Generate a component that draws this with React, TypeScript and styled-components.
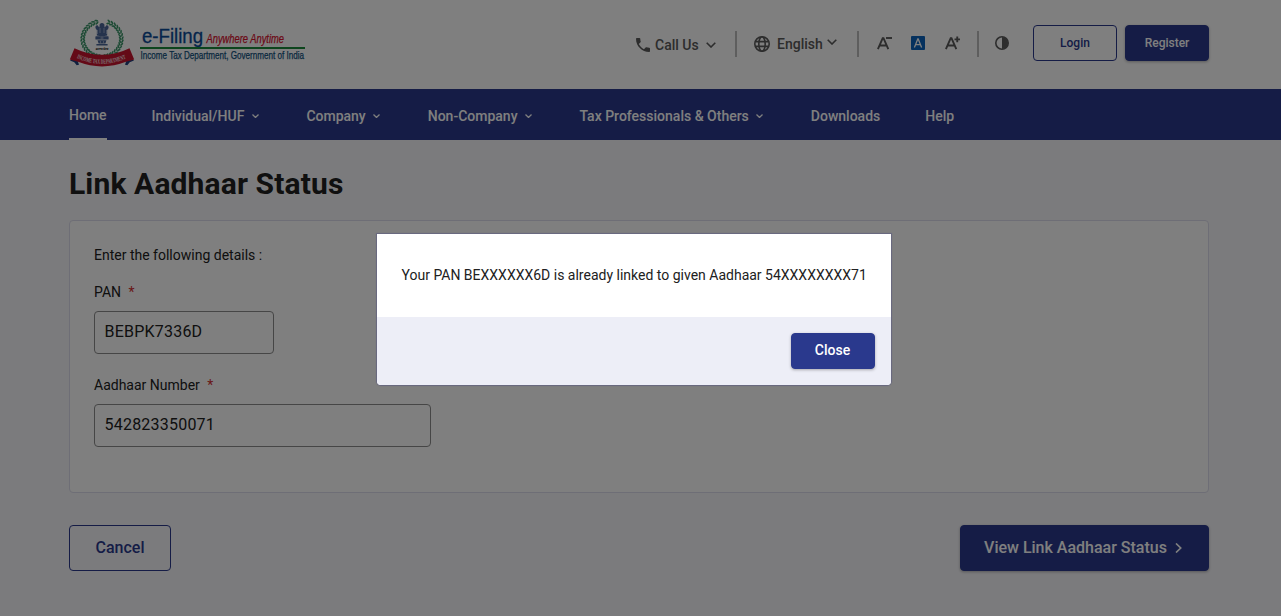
import React from "react";
import styled, { createGlobalStyle } from "styled-components";

const GlobalStyle = createGlobalStyle`
  * { box-sizing: border-box; }
  body { margin: 0; background: #f7f7fb; font-family: Roboto, "Liberation Sans", sans-serif; color: #212121; }
  button, input { font-family: inherit; }
`;

const Page = styled.div`
  position: relative;
  height: 616px;
  overflow: hidden;
`;

const Header = styled.header`
  display: flex;
  justify-content: space-between;
  height: 89px;
  padding: 0 72px 0 69px;
  background: #fff;
`;

const Logo = styled.svg`
  display: block;
  width: 240px;
  height: 60px;
  margin-top: 14px;
  overflow: visible;
`;

const Tools = styled.div`
  display: flex;
  height: 36px;
  margin-top: 25px;
  align-items: center;
  color: #5a5a5a;
`;

const Tool = styled.div<{ $gap: number; $lift?: number; $drop?: number }>`
  display: flex;
  align-items: center;
  margin-left: ${(p) => p.$gap}px;
  padding-top: ${(p) => p.$drop ?? 0}px;
  padding-bottom: ${(p) => p.$lift ?? 0}px;
  svg { display: block; }
`;

const ToolLabel = styled.span<{ $width: number; $left: number; $right: number }>`
  width: ${(p) => p.$width}px;
  margin: 0 ${(p) => p.$right}px 0 ${(p) => p.$left}px;
  font-size: 14px;
  font-weight: 500;
  line-height: 20px;
  white-space: nowrap;
`;

const Divider = styled.span<{ $gap: number }>`
  width: 2px;
  height: 26px;
  margin: 2px 0 0 ${(p) => p.$gap}px;
  background: #bdbdbd;
`;

const Button = styled.button<{ $primary?: boolean; $large?: boolean; $width: number; $size?: number; $nudge?: boolean }>`
  display: flex;
  align-items: center;
  justify-content: center;
  width: ${(p) => p.$width}px;
  height: ${(p) => (p.$large ? 46 : 36)}px;
  padding: ${(p) => (p.$nudge ? "0 1px 2px 0" : "0 0 1px")};
  border: 1px solid #2a398d;
  border-radius: 4px;
  background: ${(p) => (p.$primary ? "#2a398d" : "transparent")};
  color: ${(p) => (p.$primary ? "#fff" : "#2a398d")};
  box-shadow: ${(p) => (p.$primary ? "0 1px 3px rgba(0, 0, 0, 0.3)" : "none")};
  font-size: ${(p) => p.$size ?? 14}px;
  font-weight: 500;
  white-space: nowrap;
`;

const HeaderButtons = styled.div`
  display: flex;
  gap: 8px;
  margin-left: 24px;
`;

const Nav = styled.nav`
  display: flex;
  gap: 45px;
  height: 51px;
  padding-left: 69px;
  background: #2a398d;
`;

const NavItem = styled.a<{ $active?: boolean; $menu?: boolean }>`
  display: flex;
  align-items: center;
  gap: 7.5px;
  height: 51px;
  padding-top: 3px;
  padding-right: ${(p) => (p.$menu ? 2.5 : 0)}px;
  border-bottom: ${(p) => (p.$active ? "2px solid #fff" : "0")};
  color: #fff;
  font-size: 14px;
  font-weight: 500;
  white-space: nowrap;
`;

const Main = styled.main`
  padding: 24px 72px 0 69px;
`;

const Title = styled.h1`
  margin: 0 0 16px;
  font-size: 30px;
  line-height: 40px;
  font-weight: 700;
  letter-spacing: 0.13px;
`;

const Card = styled.section`
  height: 273px;
  padding: 24px;
  border: 1px solid #dcdcec;
  border-radius: 4px;
  background: #fff;
`;

const Intro = styled.p`
  margin: 0 0 17px;
  font-size: 14px;
  line-height: 20px;
`;

const Field = styled.label`
  display: block;
  margin-bottom: 21px;
  font-size: 14px;
  line-height: 20px;
`;

const Required = styled.span`
  margin-left: 7.5px;
  color: #d32f2f;
`;

const Input = styled.input<{ $width: number }>`
  display: block;
  width: ${(p) => p.$width}px;
  height: 43px;
  margin-top: 9px;
  padding: 0 9.5px 2px;
  border: 1px solid #8c8c8c;
  border-radius: 4px;
  background: #fff;
  color: #212121;
  font-size: 16px;
  letter-spacing: 0.22px;
`;

const Actions = styled.div`
  display: flex;
  justify-content: space-between;
  margin-top: 32px;
`;

const Backdrop = styled.div`
  position: absolute;
  inset: 0;
  display: flex;
  justify-content: center;
  align-items: flex-start;
  padding: 234px 13px 0 0;
  background: rgba(0, 0, 0, 0.5);
`;

const Dialog = styled.div`
  width: 514px;
  height: 151px;
  overflow: hidden;
  border-radius: 0 0 4px 4px;
  background: #fff;
  box-shadow: 0 0 1px 1px rgba(80, 80, 130, 0.5);
`;

const Message = styled.p`
  height: 83px;
  margin: 0;
  padding: 31px 0 0 24.5px;
  font-size: 14px;
  line-height: 20px;
  white-space: nowrap;
`;

const DialogFooter = styled.footer`
  display: flex;
  justify-content: flex-end;
  height: 68px;
  padding: 16px;
  background: #edeef7;
`;

function Chevron({ w = 10, stroke = 1.6 }: { w?: number; stroke?: number }) {
  return (
    <svg width={w} height={w * 0.6} viewBox="0 0 10 6" fill="none" stroke="currentColor" strokeWidth={(stroke * 10) / w}>
      <path d="M.7.7 5 5 9.3.7" />
    </svg>
  );
}

function Emblem() {
  const leaves = [];
  for (let i = 0; i < 17; i++) {
    const angle = 108 + i * 9.6;
    const a = (angle * Math.PI) / 180;
    for (const side of [1, -1]) {
      const x = 33 + side * 19.3 * Math.cos(a);
      const y = 25 - 17.8 * Math.sin(a);
      leaves.push(
        <g key={`${i}${side}`} transform={`translate(${x} ${y}) rotate(${side * (90 - angle)})`}>
          <ellipse cy="-1.4" rx="2" ry=".85" transform="rotate(28)" />
          <ellipse cy="1.4" rx="2" ry=".85" transform="rotate(-28)" />
        </g>
      );
    }
  }
  return (
    <g>
      <g fill="#3a9468">{leaves}</g>
      <g fill="#4a6698">
        <path d="M30.7 10.2q2.3-2.6 4.6 0l.3 3.2 2.2-2.4q2.2.5 1.8 3l-1.5 2.2.1 5.3q-5.2 1.6-10.4 0l.1-5.3-1.5-2.2q-.4-2.5 1.8-3l2.2 2.4z" />
        <rect x="26.4" y="22.2" width="13.2" height="3.4" rx=".6" />
        <path d="M28.5 26.2h9l-1.1 3.4h-6.8zM27.4 30h11.2v1.4H27.4z" />
      </g>
      <g stroke="#b4c0d6" strokeWidth=".7" fill="none">
        <path d="M31 14v5M35 14v5M28.5 16v4M37.5 16v4" />
        <circle cx="33" cy="24" r="1.1" />
        <path d="M31.5 27v2.4M34.5 27v2.4" />
      </g>
      <text x="26.5" y="35.8" fontSize="3.6" fontWeight="700" fill="#333" textLength="13" lengthAdjust="spacingAndGlyphs" fontFamily="Noto Sans, sans-serif">सत्यमेव</text>
      <path d="M1 46.5 7 42l3 8.7-2.3.6-2.4-3zM65 46.5 59 42l-3 8.7 2.3.6 2.4-3z" fill="#21407e" />
      <path d="M5.5 34.2Q33 47.5 60.5 34.2L65.2 45.4 57 47.8Q33 57 9 47.8L.8 45.4z" fill="#c9152f" />
      <path id="ribbon-line" d="M6.2 43.4Q33 56 59.8 43.4" fill="none" />
      <text fontFamily="Liberation Serif, serif" fontSize="6.4" fontWeight="700" fill="#f3e3e6">
        <textPath href="#ribbon-line" startOffset="1.5" textLength="51" lengthAdjust="spacingAndGlyphs">INCOME TAX DEPARTMENT</textPath>
      </text>
    </g>
  );
}

function FontSizeIcon({ sign }: { sign: "plus" | "minus" }) {
  return (
    <svg width="16" height="14" viewBox="0 0 16 14" fill="none" stroke="currentColor" strokeWidth="1.9">
      <path d="M.9 13.2 5.7 2.2h.8l4.8 11M2.8 9.5h6.6" />
      <path d={sign === "plus" ? "M9.5 3.4H15M12.25.6v5.6" : "M9 2h6"} />
    </svg>
  );
}

const navItems = [
  { label: "Home", active: true },
  { label: "Individual/HUF", menu: true },
  { label: "Company", menu: true },
  { label: "Non-Company", menu: true },
  { label: "Tax Professionals & Others", menu: true },
  { label: "Downloads" },
  { label: "Help" },
];

export default function App() {
  return (
    <Page>
      <GlobalStyle />
      <Header>
        <Logo viewBox="0 0 240 60">
          <Emblem />
          <g fontFamily="Liberation Sans, Arial, sans-serif">
            <text x="73" y="29" fontSize="20" fill="#0b4a97" stroke="#0b4a97" strokeWidth=".3" textLength="61" lengthAdjust="spacingAndGlyphs">e-Filing</text>
            <text x="137.5" y="29" fontSize="12" fontStyle="italic" fill="#d8122f" stroke="#d8122f" strokeWidth=".25" textLength="77.5" lengthAdjust="spacingAndGlyphs">Anywhere Anytime</text>
            <text x="71.5" y="45.3" fontSize="10.5" fill="#0f4f7d" stroke="#0f4f7d" strokeWidth=".25" textLength="163.5" lengthAdjust="spacingAndGlyphs">Income Tax Department, Government of India</text>
          </g>
          <path d="M71 34h165" stroke="#1b8a3a" strokeWidth="2" />
        </Logo>
        <Tools>
          <Tool $gap={0} $drop={3}>
            <svg width="14" height="14" viewBox="3 3 18 18" fill="currentColor">
              <path d="M6.62 10.79c1.44 2.83 3.76 5.14 6.59 6.59l2.2-2.2c.27-.27.67-.36 1.02-.24 1.12.37 2.33.57 3.57.57.55 0 1 .45 1 1V20c0 .55-.45 1-1 1-9.39 0-17-7.61-17-17 0-.55.45-1 1-1h3.5c.55 0 1 .45 1 1 0 1.25.2 2.45.57 3.57.11.35.03.74-.25 1.02l-2.2 2.2z" />
            </svg>
            <ToolLabel $width={44} $left={5} $right={7}>Call Us</ToolLabel>
            <Chevron />
          </Tool>
          <Divider $gap={19} />
          <Tool $gap={17} $drop={2}>
            <svg width="16" height="16" viewBox="2 2 20 20" fill="none" stroke="currentColor" strokeWidth="2">
              <circle cx="12" cy="12" r="9" />
              <ellipse cx="12" cy="12" rx="4" ry="9" />
              <path d="M3.5 9h17M3.5 15h17" />
            </svg>
            <ToolLabel $width={46} $left={7} $right={4}>English</ToolLabel>
            <Tool $gap={0} $lift={4}><Chevron /></Tool>
          </Tool>
          <Divider $gap={20} />
          <Tool $gap={18}><FontSizeIcon sign="minus" /></Tool>
          <Tool $gap={18}>
            <svg width="14" height="14" viewBox="0 0 14 14">
              <rect width="14" height="14" rx="1" fill="#0a63bd" />
              <path d="M3.4 11.4 6.8 3h.4l3.4 8.4M4.7 8.7h4.6" fill="none" stroke="#fff" strokeWidth="1.3" />
            </svg>
          </Tool>
          <Tool $gap={20}><FontSizeIcon sign="plus" /></Tool>
          <Divider $gap={16} />
          <Tool $gap={16}>
            <svg width="14" height="14" viewBox="0 0 14 14">
              <circle cx="7" cy="7" r="6.2" fill="none" stroke="currentColor" strokeWidth="1.6" />
              <path d="M7 1a6 6 0 0 1 0 12z" fill="currentColor" />
            </svg>
          </Tool>
          <HeaderButtons>
            <Button $width={84} $size={12}>Login</Button>
            <Button $primary $width={84} $size={12}>Register</Button>
          </HeaderButtons>
        </Tools>
      </Header>
      <Nav>
        {navItems.map((item) => (
          <NavItem key={item.label} $active={item.active} $menu={item.menu}>
            {item.label}
            {item.menu && <Chevron w={7} stroke={1.3} />}
          </NavItem>
        ))}
      </Nav>
      <Main>
        <Title>Link Aadhaar Status</Title>
        <Card>
          <Intro>Enter the following details :</Intro>
          <Field>
            PAN<Required>*</Required>
            <Input $width={180} defaultValue="BEBPK7336D" />
          </Field>
          <Field>
            Aadhaar Number<Required>*</Required>
            <Input $width={337} defaultValue="542823350071" />
          </Field>
        </Card>
        <Actions>
          <Button $large $width={102} $size={16}>Cancel</Button>
          <Button $large $primary $width={249} $size={16}>
            View Link Aadhaar Status
            <svg width="10" height="10" viewBox="0 0 10 10" fill="none" stroke="currentColor" strokeWidth="1.7" style={{ marginLeft: 8 }}>
              <path d="M1 .5 5.7 5 1 9.5" />
            </svg>
          </Button>
        </Actions>
      </Main>
      <Backdrop>
        <Dialog role="dialog">
          <Message>Your PAN BEXXXXXX6D is already linked to given Aadhaar 54XXXXXXXX71</Message>
          <DialogFooter>
            <Button $primary $nudge $width={84}>Close</Button>
          </DialogFooter>
        </Dialog>
      </Backdrop>
    </Page>
  );
}
